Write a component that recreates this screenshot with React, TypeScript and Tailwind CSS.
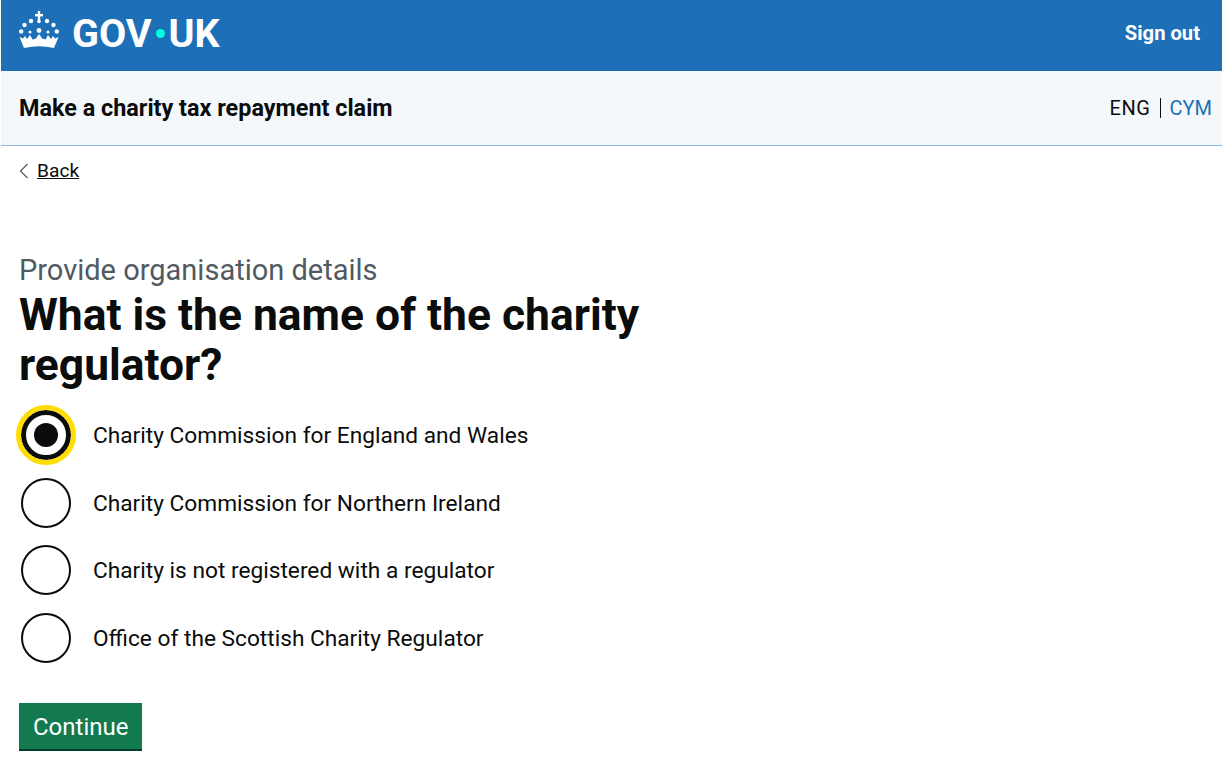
const OPTIONS = [
  'Charity Commission for England and Wales',
  'Charity Commission for Northern Ireland',
  'Charity is not registered with a regulator',
  'Office of the Scottish Charity Regulator',
]

function Crown() {
  return (
    <svg width="40" height="38" viewBox="0 0 40 38" fill="white" className="mb-[7px]">
      <rect x="18.8" y="0" width="2.4" height="10" />
      <rect x="16" y="3" width="8" height="2.4" />
      <circle cx="20" cy="10.5" r="1.8" />
      <circle cx="12" cy="10" r="2.2" />
      <circle cx="28" cy="10" r="2.2" />
      <circle cx="5.5" cy="14" r="2.2" />
      <circle cx="34.5" cy="14" r="2.2" />
      <circle cx="2.2" cy="20.5" r="2.2" />
      <circle cx="37.8" cy="20.5" r="2.2" />
      <circle cx="20" cy="19.5" r="2.4" />
      <circle cx="11" cy="21" r="1.5" />
      <circle cx="29" cy="21" r="1.5" />
      <path d="M5 37 L0.5 26 L4 27.5 L6 25 L8 28 L11 24 L13.5 28.5 L17 27.5 L18.5 25 L20 23 L21.5 25 L23 27.5 L26.5 28.5 L29 24 L32 28 L34 25 L36 27.5 L39.5 26 L35 37 Q20 33.5 5 37 Z" />
    </svg>
  )
}

export default function App() {
  return (
    <div className="min-h-[770px] bg-white text-[#0b0c0c] font-['Roboto','Noto_Sans',sans-serif]">
      <header className="h-[71px] ml-px bg-[#1d70b8] flex items-center justify-between pb-[4px] pl-[18px] pr-[22px]">
        <div className="flex items-center gap-[13px] text-white">
          <Crown />
          <span className="flex items-center text-[39.5px] font-bold leading-none">
            GOV
            <span className="mx-[4px] w-[9px] h-[9px] rounded-full bg-[#00ffe0]" />
            UK
          </span>
        </div>
        <a className="text-white font-bold text-[20.2px]">Sign out</a>
      </header>

      <div className="h-[75px] ml-px bg-[#f4f8fb] border-b border-[#8fb8de] flex items-center justify-between pl-[18px] pr-[10px]">
        <span className="pt-[2px] text-[23.4px] font-bold">Make a charity tax repayment claim</span>
        <div className="flex items-center text-[20px]">
          <span className="tracking-[0.6px]">ENG</span>
          <span className="mx-[9px] h-5 border-l border-[#0b0c0c]" />
          <a className="text-[#1d70b8]">CYM</a>
        </div>
      </div>

      <main className="px-[19px]">
        <a className="mt-[12px] flex items-center gap-[8px] text-[19.2px] leading-[25px]">
          <svg width="10" height="16" viewBox="0 0 10 16" fill="none" stroke="#505a5f" strokeWidth="1.2">
            <path d="M8.5 1 L1.5 8 L8.5 15" />
          </svg>
          <span className="underline">Back</span>
        </a>

        <p className="mt-[69px] text-[29px] leading-[36px] text-[#505a5f]">Provide organisation details</p>
        <h1 className="mt-[2px] w-[660px] text-[44.4px] leading-[50px] font-bold">What is the name of the charity regulator?</h1>

        <div className="mt-[20px] flex flex-col gap-[17.5px]">
          {OPTIONS.map((label, i) => (
            <div key={label} className="flex items-center gap-[22px] h-[50px] pl-[2px]">
              <span className={`flex items-center justify-center w-[50px] h-[50px] rounded-full border-2 border-[#0b0c0c] bg-white ${i === 0 ? 'border-[5px] outline-[5px] outline-[#ffdd00]' : ''}`}>
                {i === 0 && <span className="w-[24px] h-[24px] rounded-full bg-[#0b0c0c]" />}
              </span>
              <span className="pt-[3px] text-[22.7px]">{label}</span>
            </div>
          ))}
        </div>

        <button className="mt-[40px] h-[48px] px-[14px] pt-[2px] bg-[#137a50] border-b-2 border-[#003d28] text-white text-[24px]">
          Continue
        </button>
      </main>
    </div>
  )
}
